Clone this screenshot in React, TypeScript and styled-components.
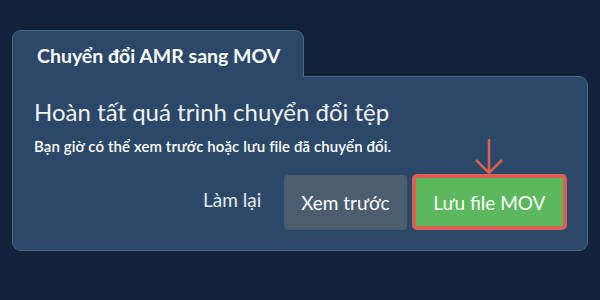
import React from "react";
import styled, { createGlobalStyle } from "styled-components";

const GlobalStyle = createGlobalStyle`
    html, body {
        margin: 0;
        padding: 0;
        background: #12223a;
    }
    body {
        font-family: Lato, "Noto Sans", sans-serif;
        width: 600px;
        height: 300px;
        overflow: hidden;
    }
`;

function App() {
    return (
        <>
            <GlobalStyle />
            <Page>
                <Tab>Chuyển đổi AMR sang MOV</Tab>
                <Panel>
                    <Heading>Hoàn tất quá trình chuyển đổi tệp</Heading>
                    <Subtext>Bạn giờ có thể xem trước hoặc lưu file đã chuyển đổi.</Subtext>
                    <Actions>
                        <TextButton>Làm lại</TextButton>
                        <Button $variant="secondary">Xem trước</Button>
                        <Highlight>
                            <Arrow width="30" height="36" viewBox="0 0 30 36">
                                <path d="M15 0 V34 M2 21 L15 34 L28 21" fill="none" stroke="#dc5f55" strokeWidth="2.5" />
                            </Arrow>
                            <Button $variant="primary">Lưu file MOV</Button>
                        </Highlight>
                    </Actions>
                </Panel>
            </Page>
        </>
    );
}

export default App;

const Page = styled.main`
    padding: 30px 12px 0 12px;
    display: flex;
    flex-direction: column;
    align-items: flex-start;
`;

const Tab = styled.div`
    position: relative;
    z-index: 1;
    box-sizing: border-box;
    width: 292px;
    height: 47px;
    margin-bottom: -1px;
    padding: 13px 0 0 24px;
    background: #2c4868;
    border: 1px solid #4a6687;
    border-bottom: none;
    border-radius: 9px 9px 0 0;
    color: #ffffff;
    font-size: 19.5px;
    font-weight: 700;
    line-height: 24px;
`;

const Panel = styled.section`
    box-sizing: border-box;
    width: 576px;
    height: 175px;
    padding: 20px 20px 0 21px;
    background: #2c4868;
    border: 1px solid #4a6687;
    border-radius: 0 9px 9px 9px;
    display: flex;
    flex-direction: column;
`;

const Heading = styled.h2`
    margin: 0;
    color: #f0f0f0;
    font-size: 24px;
    font-weight: 400;
    line-height: 30px;
`;

const Subtext = styled.p`
    margin: 10px 0 0 0;
    color: #ffffff;
    font-size: 15px;
    font-weight: 600;
    letter-spacing: 0.1px;
    line-height: 18px;
`;

const Actions = styled.div`
    margin-top: 19px;
    display: flex;
    justify-content: flex-end;
    align-items: center;
    gap: 5px;
`;

const TextButton = styled.button`
    margin: 0 18px 6px 0;
    padding: 0;
    background: none;
    border: none;
    color: #e4e8ee;
    font-family: Lato, "Noto Sans", sans-serif;
    font-size: 19px;
    font-weight: 400;
`;

const Highlight = styled.div`
    position: relative;
    display: flex;
    border: 4px solid #dc5f55;
    border-radius: 5px;
`;

const Arrow = styled.svg`
    position: absolute;
    left: 50%;
    bottom: 100%;
    margin-left: -15px;
    margin-bottom: 3px;
`;

const Button = styled.button<{ $variant: "primary" | "secondary" }>`
    box-sizing: border-box;
    height: ${(p) => (p.$variant === "primary" ? "48px" : "55px")};
    padding: 0 ${(p) => (p.$variant === "primary" ? "17.5px" : "17px")};
    background: ${(p) => (p.$variant === "primary" ? "#5cb85c" : "#4b5d6e")};
    border: none;
    border-radius: ${(p) => (p.$variant === "primary" ? "0" : "4px")};
    color: #ffffff;
    font-family: Lato, "Noto Sans", sans-serif;
    font-size: 19px;
    font-weight: 400;
`;
